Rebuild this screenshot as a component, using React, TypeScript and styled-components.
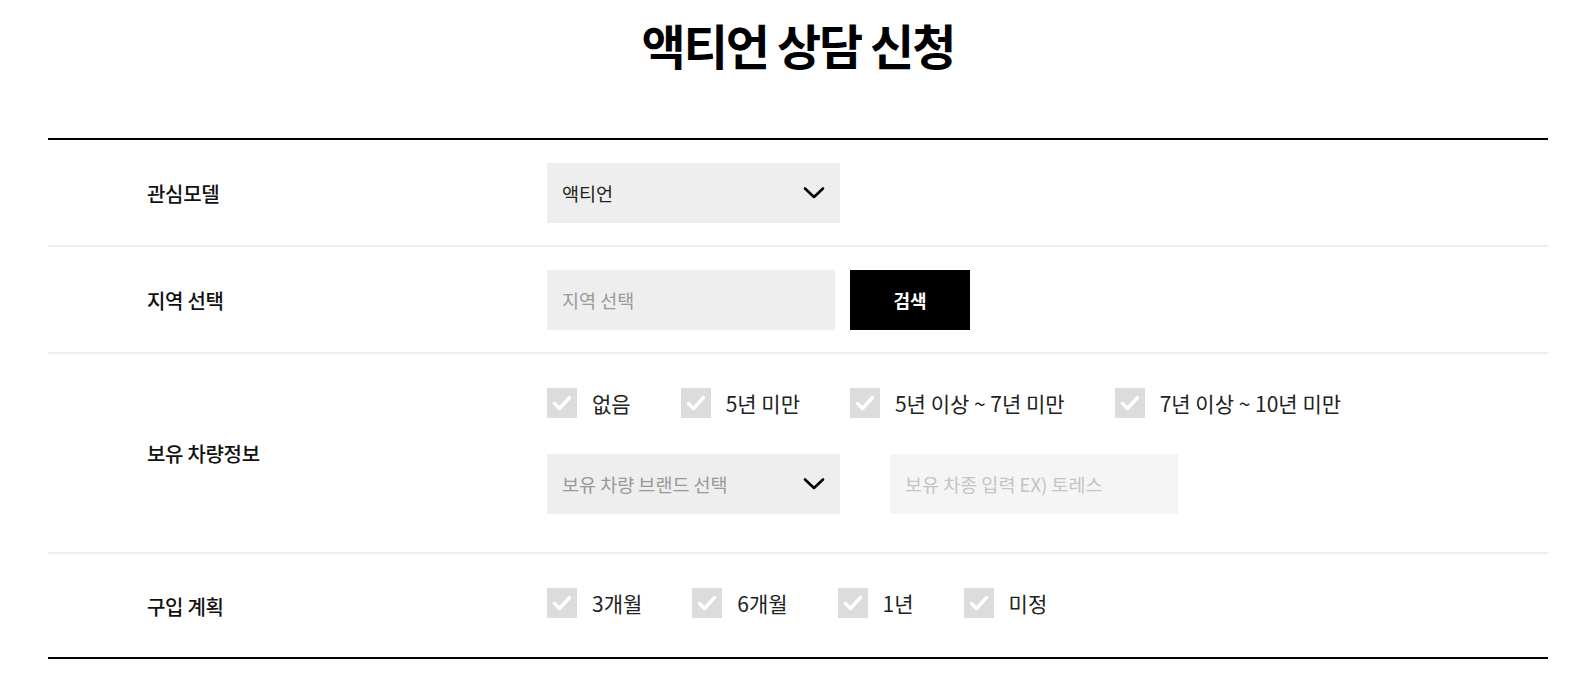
import React from "react";
import styled, { createGlobalStyle } from "styled-components";

const GlobalStyle = createGlobalStyle`
  * { box-sizing: border-box; }
  body {
    margin: 0;
    background: #fff;
    color: #111;
    font-family: "Noto Sans CJK KR", "Noto Sans", sans-serif;
  }
`;

const Page = styled.main`
  width: 1500px;
  margin: 0 auto;
`;

const Title = styled.h1`
  margin: 0;
  height: 138px;
  padding-top: 10px;
  text-align: center;
  font-size: 48px;
  line-height: 68px;
  font-weight: 700;
  letter-spacing: -2px;
  color: #000;
`;

const Form = styled.div`
  border-top: 2px solid #000;
  border-bottom: 2px solid #000;
`;

const Row = styled.div`
  display: flex;
  align-items: center;
  padding: 23px 0 22px;
  & + & {
    border-top: 2px solid #eeeeee;
  }
`;

const Label = styled.div`
  width: 499px;
  flex: none;
  padding-left: 99px;
  font-size: 20px;
  font-weight: 500;
  letter-spacing: -0.3px;
  color: #111;
`;

const Content = styled.div`
  display: flex;
  flex-direction: column;
`;

const FieldLine = styled.div<{ $last?: boolean }>`
  display: flex;
  align-items: center;
  gap: ${({ $last }) => ($last ? "50px" : "15px")};
  margin-bottom: ${({ $last }) => ($last ? "16px" : "0")};
`;

const Field = styled.div<{ $width: number; $light?: boolean; $muted?: boolean }>`
  width: ${({ $width }) => $width}px;
  height: 60px;
  display: flex;
  align-items: center;
  justify-content: space-between;
  padding: 0 15px 0 15px;
  background: ${({ $light }) => ($light ? "#f5f5f5" : "#eeeeee")};
  font-size: 18.5px;
  color: ${({ $light, $muted }) => ($light ? "#c4c4c4" : $muted ? "#999" : "#222")};
`;

const SearchButton = styled.button`
  width: 120px;
  height: 60px;
  border: 0;
  background: #000;
  color: #fff;
  font-family: inherit;
  font-size: 18px;
  font-weight: 700;
  cursor: pointer;
`;

const CheckGroup = styled.div<{ $gapBelow: number }>`
  display: flex;
  align-items: center;
  height: 52px;
  margin-bottom: ${({ $gapBelow }) => $gapBelow}px;
`;

const CheckItem = styled.label`
  display: flex;
  align-items: center;
  gap: 15px;
  margin-right: 50px;
  font-size: 21px;
  color: #222;
`;

const Box = styled.span`
  width: 30px;
  height: 30px;
  flex: none;
  background: #dcdcdc;
  display: flex;
  align-items: center;
  justify-content: center;
`;

const Chevron = () => (
  <svg width="22" height="14" viewBox="0 0 22 14" fill="none">
    <path d="M2 2.5L11 11L20 2.5" stroke="#000" strokeWidth="2.6" strokeLinecap="round" strokeLinejoin="round" />
  </svg>
);

const Check = ({ label }: { label: string }) => (
  <CheckItem>
    <Box>
      <svg width="30" height="30" viewBox="0 0 30 30" fill="none">
        <path d="M7.5 15.5L12.5 20.5L22.5 9.5" stroke="#fff" strokeWidth="3.4" strokeLinecap="round" strokeLinejoin="round" />
      </svg>
    </Box>
    {label}
  </CheckItem>
);

export default function App() {
  return (
    <Page>
      <GlobalStyle />
      <Title>액티언 상담 신청</Title>
      <Form>
        <Row>
          <Label>관심모델</Label>
          <Content>
            <Field $width={293}>
              <span>액티언</span>
              <Chevron />
            </Field>
          </Content>
        </Row>
        <Row>
          <Label>지역 선택</Label>
          <Content>
            <FieldLine>
              <Field $width={288} $muted>
                <span>지역 선택</span>
              </Field>
              <SearchButton>검색</SearchButton>
            </FieldLine>
          </Content>
        </Row>
        <Row>
          <Label>보유 차량정보</Label>
          <Content>
            <CheckGroup $gapBelow={25}>
              {["없음", "5년 미만", "5년 이상 ~ 7년 미만", "7년 이상 ~ 10년 미만"].map((l) => (
                <Check key={l} label={l} />
              ))}
            </CheckGroup>
            <FieldLine $last>
              <Field $width={293} $muted>
                <span>보유 차량 브랜드 선택</span>
                <Chevron />
              </Field>
              <Field $width={288} $light>
                <span>보유 차종 입력 EX) 토레스</span>
              </Field>
            </FieldLine>
          </Content>
        </Row>
        <Row>
          <Label>구입 계획</Label>
          <Content>
            <CheckGroup $gapBelow={6}>
              {["3개월", "6개월", "1년", "미정"].map((l) => (
                <Check key={l} label={l} />
              ))}
            </CheckGroup>
          </Content>
        </Row>
      </Form>
    </Page>
  );
}
